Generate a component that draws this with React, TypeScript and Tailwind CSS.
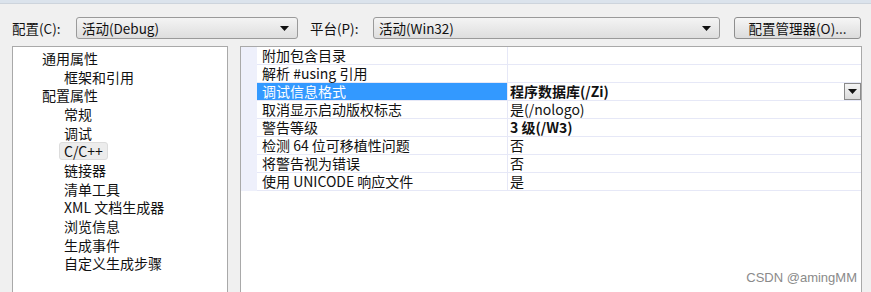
import React from 'react';

const font = { fontFamily: '"Noto Sans CJK SC", "Noto Sans", sans-serif' };

interface PropRow {
  name: string;
  value: string;
  bold?: boolean;
  selected?: boolean;
}

const rows: PropRow[] = [
  { name: '附加包含目录', value: '' },
  { name: '解析 #using 引用', value: '' },
  { name: '调试信息格式', value: '程序数据库(/Zi)', bold: true, selected: true },
  { name: '取消显示启动版权标志', value: '是(/nologo)' },
  { name: '警告等级', value: '3 级(/W3)', bold: true },
  { name: '检测 64 位可移植性问题', value: '否' },
  { name: '将警告视为错误', value: '否' },
  { name: '使用 UNICODE 响应文件', value: '是' },
];

const tree: { label: string; level: number; active?: boolean }[] = [
  { label: '通用属性', level: 1 },
  { label: '框架和引用', level: 2 },
  { label: '配置属性', level: 1 },
  { label: '常规', level: 2 },
  { label: '调试', level: 2 },
  { label: 'C/C++', level: 2, active: true },
  { label: '链接器', level: 2 },
  { label: '清单工具', level: 2 },
  { label: 'XML 文档生成器', level: 2 },
  { label: '浏览信息', level: 2 },
  { label: '生成事件', level: 2 },
  { label: '自定义生成步骤', level: 2 },
];

function Arrow() {
  return (
    <svg width="9" height="5" viewBox="0 0 9 5">
      <path d="M0 0 H9 L4.5 5 Z" fill="#111" />
    </svg>
  );
}

function Combo({ value, width }: { value: string; width: string }) {
  return (
    <div
      className={`${width} h-[22px] flex items-center justify-between pl-[5px] pr-[8px] border border-[#9a9a9a] rounded-[3px] bg-gradient-to-b from-[#f4f4f4] to-[#dedede] text-[13.5px] leading-[20px] text-[#111]`}
    >
      <span>{value}</span>
      <Arrow />
    </div>
  );
}

export default function App() {
  return (
    <div className="w-[871px] h-[292px] overflow-hidden bg-[#f0f0f0] flex flex-col" style={font}>
      <div className="h-[4px] bg-[#dbe3ec] border-b border-[#cdd4dc]" />

      <div className="flex items-center mt-[13px] h-[22px]">
        <span className="ml-[12px] w-[64px] text-[13.5px] text-[#111]">配置(C):</span>
        <Combo value="活动(Debug)" width="w-[222px]" />
        <span className="ml-[12px] w-[63px] text-[13.5px] text-[#111]">平台(P):</span>
        <Combo value="活动(Win32)" width="w-[347px]" />
        <div className="ml-[14px] w-[127px] h-[22px] flex items-center justify-center border border-[#8e8e8e] rounded-[3px] bg-gradient-to-b from-[#f6f6f6] to-[#dcdcdc] text-[13.5px] leading-[20px] text-[#111]">
          配置管理器(O)...
        </div>
      </div>

      <div className="flex flex-1 mt-[7px]">
        <div className="ml-[12px] w-[216px] bg-white border border-[#a9a9a9] border-b-0 pt-[1.5px]">
          {tree.map((t) => (
            <div key={t.label} className="h-[18.7px] flex items-center text-[14px] leading-[18px] text-[#111]">
              {t.active ? (
                <span className="ml-[46px] px-[4px] h-[18px] flex items-center rounded-[3px] bg-[#ececec] border border-[#dcdcdc]">
                  {t.label}
                </span>
              ) : (
                <span className={t.level === 1 ? 'ml-[29px]' : 'ml-[51px]'}>{t.label}</span>
              )}
            </div>
          ))}
        </div>

        <div className="ml-[12px] w-[622px] bg-white border border-[#a9a9a9] border-b-0 relative">
          {rows.map((r) => (
            <div key={r.name} className="flex h-[18px] text-[14px] leading-[17px]">
              <div className="w-[16px] bg-[#eef0fb]" />
              <div
                className={`w-[250px] flex items-center pl-[5px] border-b border-[#e6e8f7] ${
                  r.selected ? 'bg-[#3399ff] text-white' : 'text-[#111]'
                }`}
              >
                {r.name}
              </div>
              <div className="flex-1 flex items-center justify-between pl-[2px] border-b border-l border-[#e6e8f7] text-[#111]">
                <span className={r.bold ? 'font-bold' : ''}>{r.value}</span>
                {r.selected && (
                  <div className="w-[17px] h-[17px] flex items-center justify-center border border-[#8a8a8a] bg-gradient-to-b from-[#f4f4f4] to-[#dcdcdc]">
                    <Arrow />
                  </div>
                )}
              </div>
            </div>
          ))}
          <span
            className="absolute right-[4px] bottom-[6px] text-[13px] leading-[16px] text-[#8a8a8a]"
            style={{ fontFamily: '"Liberation Sans", sans-serif' }}
          >
            CSDN @amingMM
          </span>
        </div>
      </div>
    </div>
  );
}
